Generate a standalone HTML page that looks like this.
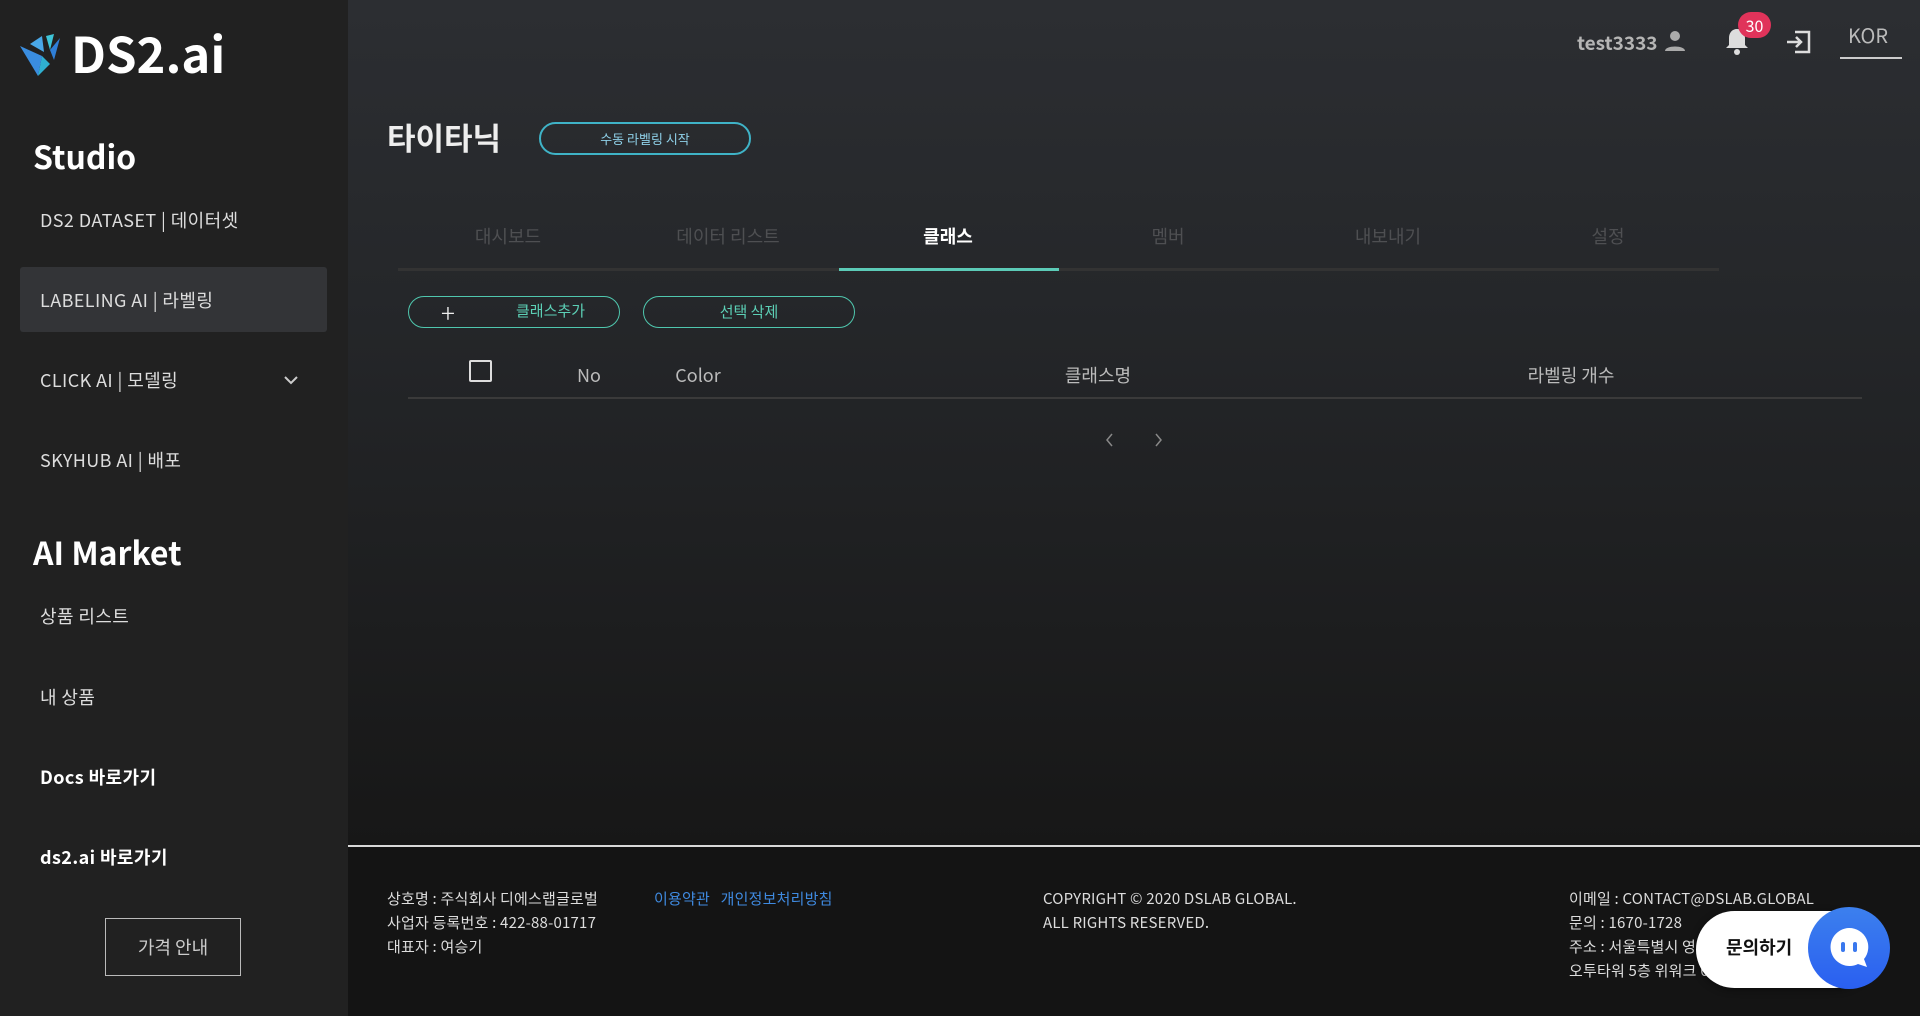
<!DOCTYPE html>
<html><head><meta charset="utf-8"><style>
*{margin:0;padding:0;box-sizing:border-box}
body{width:1920px;height:1016px;overflow:hidden;font-family:"Noto Sans CJK KR","Liberation Sans",sans-serif;line-height:1.2;background:#171717;position:relative;color:#fff}
.abs{position:absolute;white-space:nowrap}
#side{position:absolute;left:0;top:0;width:348px;height:1016px;background:#212121}
#main{position:absolute;left:348px;top:0;width:1572px;height:845px;background:linear-gradient(#2c2e32,#25272a 35%,#171717)}
#foot{position:absolute;left:348px;top:845px;width:1572px;height:171px;background:#141414;border-top:2px solid #d8d8d8}
.nav{font-size:18px;color:#ddd;left:40px;letter-spacing:0.4px}
.tab{position:absolute;top:226px;width:220px;text-align:center;font-size:18px;color:#4e4f52}
.th{position:absolute;top:365px;font-size:18px;color:#bbb;transform:translateX(-50%)}
.ft{font-size:15px;color:#ddd;line-height:24px;letter-spacing:0.2px}
</style></head><body>
<div id="side">
  <svg class="abs" style="left:20px;top:34px" width="42" height="44" viewBox="0 0 42 44">
    <polygon points="0,12 18,42 22,22" fill="#3a8de0"/>
    <polygon points="18,42 22,22 30,30" fill="#2fb0d0"/>
    <polygon points="10,10 22,2 24,18" fill="#4aa8e8"/>
    <polygon points="26,2 34,0 30,16" fill="#3ec5d8"/>
    <polygon points="30,16 40,4 34,26" fill="#2f7fd8"/>
  </svg>
  <div class="abs" style="left:71px;top:24px;font-size:49px;font-weight:bold;color:#fff">DS2.ai</div>
  <div class="abs" style="left:33px;top:137px;font-size:32px;font-weight:bold">Studio</div>
  <div class="abs nav" style="top:210px">DS2 DATASET | 데이터셋</div>
  <div class="abs" style="left:20px;top:267px;width:307px;height:65px;background:#333437;border-radius:3px"></div>
  <div class="abs nav" style="top:290px">LABELING AI | 라벨링</div>
  <div class="abs nav" style="top:370px">CLICK AI | 모델링</div>
  <svg class="abs" style="left:283px;top:374px" width="16" height="12" viewBox="0 0 16 12"><path d="M2 3l6 6 6-6" stroke="#ccc" stroke-width="2" fill="none"/></svg>
  <div class="abs nav" style="top:450px">SKYHUB AI | 배포</div>
  <div class="abs" style="left:33px;top:533px;font-size:32px;font-weight:bold">AI Market</div>
  <div class="abs nav" style="top:606px">상품 리스트</div>
  <div class="abs nav" style="top:687px">내 상품</div>
  <div class="abs nav" style="top:767px;font-weight:bold;color:#fff">Docs 바로가기</div>
  <div class="abs nav" style="top:847px;font-weight:bold;color:#fff">ds2.ai 바로가기</div>
  <div class="abs" style="left:105px;top:918px;width:136px;height:58px;border:1px solid #bbb;color:#ccc;font-size:18px;text-align:center;line-height:56px">가격 안내</div>
</div>
<div id="main">
  <div class="abs" style="left:1229px;top:32px;font-size:19px;font-weight:bold;color:#b5b5b5">test3333</div>
  <svg class="abs" style="left:1315px;top:29px" width="24" height="24" viewBox="0 0 24 24"><circle cx="12" cy="7" r="5" fill="#aaa"/><path d="M2 22c0-6 20-6 20 0z" fill="#aaa"/></svg>
  <svg class="abs" style="left:1376px;top:26px" width="26" height="30" viewBox="0 0 26 30"><path d="M13 3c-5 0-8 4-8 9v7l-3 3h22l-3-3v-7c0-5-3-9-8-9z" fill="#ddd"/><circle cx="13" cy="26" r="3" fill="#ddd"/></svg>
  <div class="abs" style="left:1390px;top:12px;width:33px;height:26px;border-radius:13px;background:#e0335a;color:#fff;font-size:16px;text-align:center;line-height:26px">30</div>
  <svg class="abs" style="left:1437px;top:28px" width="28" height="28" viewBox="0 0 28 28"><path d="M10 4h14v20H10M2 14h14M11 9l5 5-5 5" stroke="#ddd" stroke-width="2.5" fill="none"/></svg>
  <div class="abs" style="left:1500px;top:23px;font-size:20px;color:#bbb">KOR</div>
  <div class="abs" style="left:1492px;top:57px;width:62px;height:2px;background:#ccc"></div>

  <div class="abs" style="left:39px;top:118px;font-size:31px;font-weight:bold;color:#eee">타이타닉</div>
  <div class="abs" style="left:191px;top:122px;width:212px;height:33px;border:2px solid #3fb3c7;border-radius:17px;text-align:center;font-size:13px;line-height:29px;color:#8fd0e8">수동 라벨링 시작</div>

  <div class="tab" style="left:50px">대시보드</div>
  <div class="tab" style="left:270px">데이터 리스트</div>
  <div class="tab" style="left:490px;color:#fff;font-weight:bold">클래스</div>
  <div class="tab" style="left:710px">멤버</div>
  <div class="tab" style="left:930px">내보내기</div>
  <div class="tab" style="left:1150px">설정</div>
  <div class="abs" style="left:50px;top:268px;width:1321px;height:3px;background:#333"></div>
  <div class="abs" style="left:491px;top:268px;width:220px;height:3px;background:#5ccbb7"></div>

  <div class="abs" style="left:60px;top:296px;width:212px;height:32px;border:1.5px solid #4fc7ae;border-radius:16px"></div>
  <div class="abs" style="left:93px;top:295px;font-size:26px;color:#eee;font-weight:300;line-height:36px">+</div>
  <div class="abs" style="left:168px;top:302px;font-size:15px;color:#5cd0b6">클래스추가</div>
  <div class="abs" style="left:295px;top:296px;width:212px;height:32px;border:1.5px solid #4fc7ae;border-radius:16px;text-align:center;font-size:15px;line-height:29px;color:#5cd0b6">선택 삭제</div>

  <div class="abs" style="left:121px;top:360px;width:23px;height:22px;border:2px solid #ddd;border-radius:2px"></div>
  <div class="th" style="left:241px">No</div>
  <div class="th" style="left:350px">Color</div>
  <div class="th" style="left:750px">클래스명</div>
  <div class="th" style="left:1223px">라벨링 개수</div>
  <div class="abs" style="left:60px;top:397px;width:1454px;height:2px;background:#3a3a3a"></div>
  <svg class="abs" style="left:755px;top:432px" width="70" height="16" viewBox="0 0 70 16"><path d="M9 2l-5 6 5 6M53 2l5 6-5 6" stroke="#888" stroke-width="1.5" fill="none"/></svg>
</div>
<div id="foot">
  <div class="abs ft" style="left:39px;top:40px">상호명 : 주식회사 디에스랩글로벌<br>사업자 등록번호 : 422-88-01717<br>대표자 : 여승기</div>
  <div class="abs ft" style="left:306px;top:40px;color:#3f8ae0">이용약관 &nbsp; 개인정보처리방침</div>
  <div class="abs ft" style="left:695px;top:40px">COPYRIGHT © 2020 DSLAB GLOBAL.<br>ALL RIGHTS RESERVED.</div>
  <div class="abs ft" style="left:1221px;top:40px">이메일 : CONTACT@DSLAB.GLOBAL<br>문의 : 1670-1728<br>주소 : 서울특별시 영등포구<br>오투타워 5층 위워크 6</div>
  <div class="abs" style="left:1348px;top:64px;width:177px;height:77px;background:#fff;border-radius:39px;box-shadow:0 2px 8px rgba(0,0,0,.4)"></div>
  <div class="abs" style="left:1378px;top:90px;font-size:18px;color:#111;font-weight:bold">문의하기</div>
  <div class="abs" style="left:1460px;top:60px;width:82px;height:82px;border-radius:50%;background:linear-gradient(#3c80ee,#2a5ff0)"></div>
  <svg class="abs" style="left:1475px;top:75px" width="52" height="52" viewBox="0 0 52 52"><path d="M26 6a19 19 0 1 0 9 36l9 3-3-8A19 19 0 0 0 26 6z" fill="#fff"/><rect x="18" y="20" width="4" height="10" rx="2" fill="#3a78ee"/><rect x="30" y="20" width="4" height="10" rx="2" fill="#3a78ee"/></svg>
</div>
</body></html>
